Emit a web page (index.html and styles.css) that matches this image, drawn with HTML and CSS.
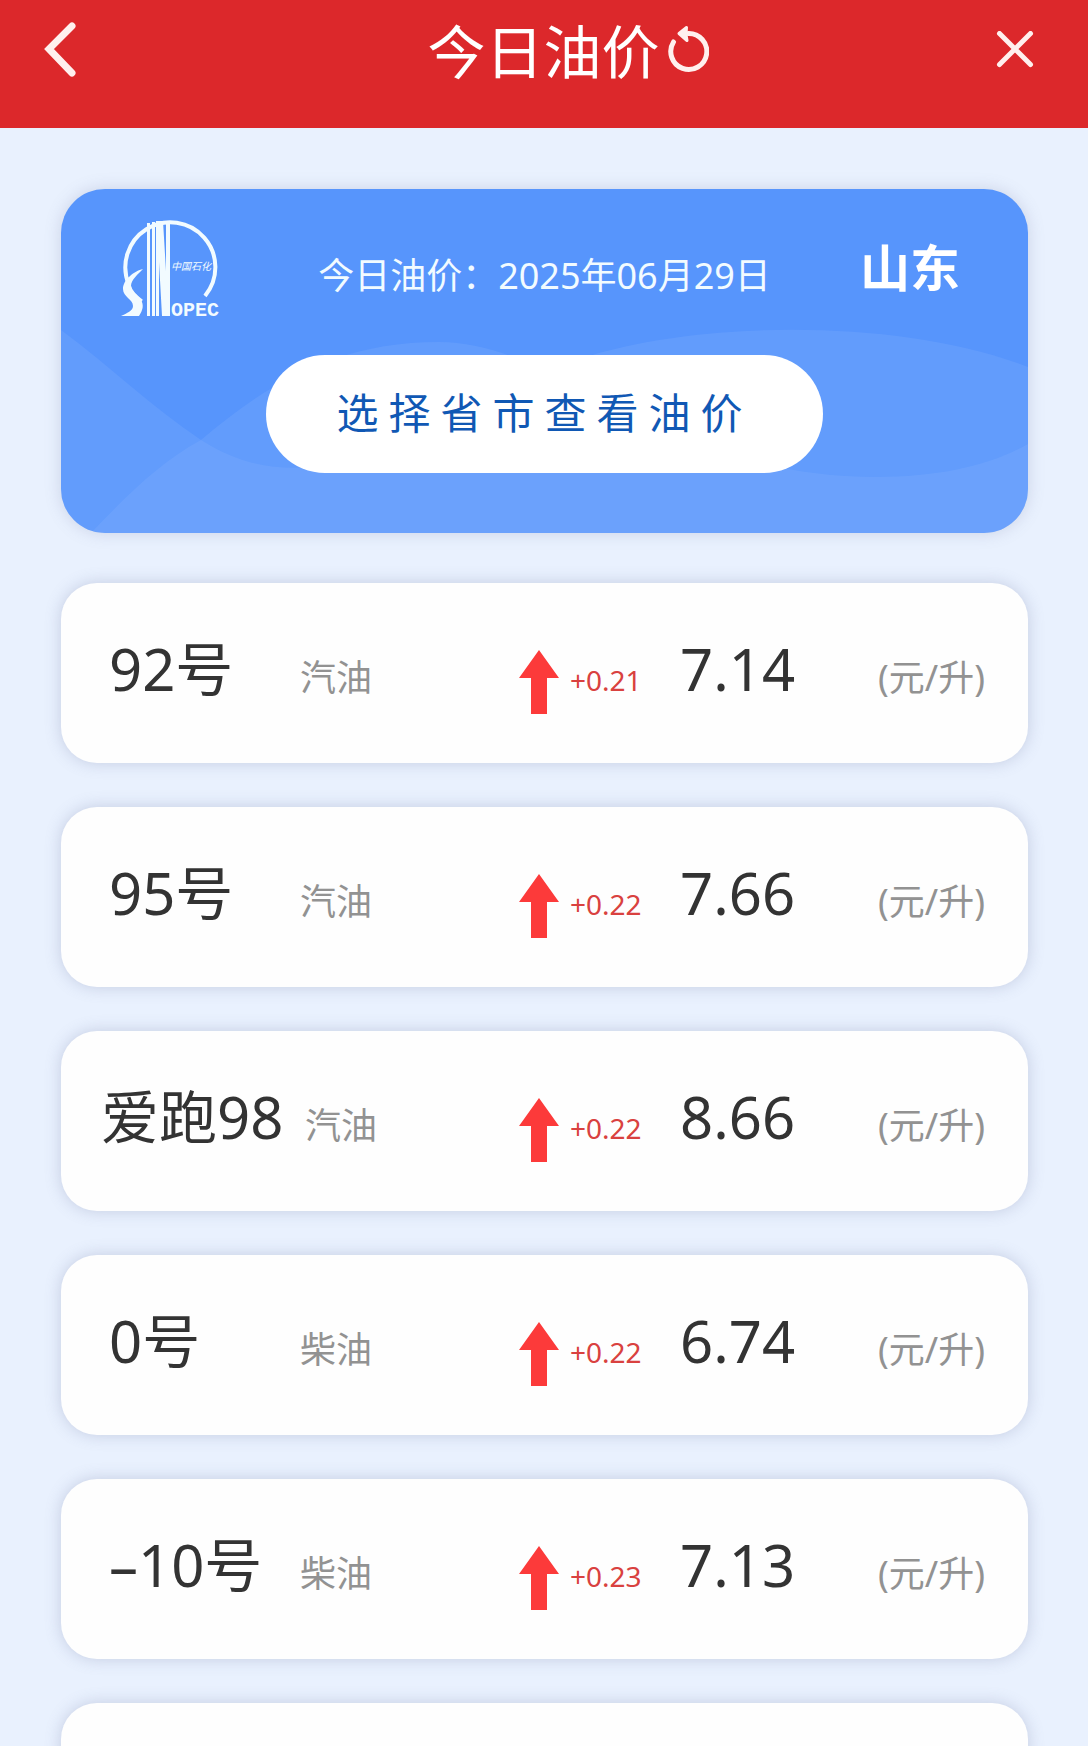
FILE: index.html
```html
<!DOCTYPE html>
<html lang="zh-CN">
<head>
<meta charset="utf-8">
<meta name="viewport" content="width=device-width, initial-scale=1">
<title>今日油价</title>
<link rel="stylesheet" href="styles.css">
</head>
<body>
<header class="topbar">
  <div class="topbar-start">
    <button class="icon-button" type="button" aria-label="返回">
      <svg width="34" height="56" viewBox="0 0 34 56" fill="none" stroke="currentColor" stroke-width="7" stroke-linecap="round" stroke-linejoin="miter"><path d="M29 4 6 27l23 24"/></svg>
    </button>
  </div>
  <h1 class="topbar-title">今日油价</h1>
  <div class="topbar-end">
    <button class="icon-button" type="button" aria-label="刷新">
      <svg width="42" height="50" viewBox="0 0 42 50" fill="none" stroke="currentColor" stroke-width="5" stroke-linecap="round"><path d="M6.500 17A18 18 0 1 0 21 8.500"/><path fill="currentColor" stroke-width="3" stroke-linejoin="round" d="M19.500 2.500 12 8.500l8 7-1-6z"/></svg>
    </button>
    <button class="icon-button" type="button" aria-label="关闭">
      <svg width="38" height="38" viewBox="0 0 38 38" fill="none" stroke="currentColor" stroke-width="5" stroke-linecap="round"><path d="m3.500 2.500 31 31m0-31-31 31"/></svg>
    </button>
  </div>
</header>

<main class="content">
  <section class="hero">
    <svg class="hero-waves" viewBox="0 0 967 344" preserveAspectRatio="none" aria-hidden="true">
      <path d="M0 141C50 178 92 219 140 251C178 275 212 281 250 278C350 266 430 196 538 164C660 130 850 132 967 178V344H0Z"/>
      <path d="M30 344C70 302 100 273 140 251C200 200 270 153 378 153C500 153 600 288 815 288C880 288 930 276 967 255V344Z"/>
    </svg>
    <div class="hero-info">
      <svg class="logo" width="98" height="108" viewBox="0 0 98 108" role="img" aria-label="SINOPEC 中国石化">
        <path d="M8 68A45 45 0 1 1 84 79" fill="none" stroke="currentColor" stroke-width="4"/>
        <path d="M26 6h3v93h-3zM31 5h3v94h-3zM35 4h7l3 50V4h4v95h-8l-3-54v54h-3z" fill="currentColor"/>
        <path d="M22 52C13 54 2 63 2 72c0 8 10 10 10 17 0 5-6 7-12 10h18c4-6 5-11 2-16-3-6-10-8-10-14 0-6 7-12 12-17z" fill="currentColor"/>
        <path d="M8 68c2 7 7 12 13 16" fill="none" stroke="currentColor" stroke-width="3"/>
        <text class="logo-script" x="50" y="53">中国石化</text>
        <text class="logo-name" x="50" y="99">OPEC</text>
      </svg>
      <p class="hero-date">今日油价：2025年06月29日</p>
      <strong class="hero-region">山东</strong>
    </div>
    <button class="region-button" type="button">选择省市查看油价</button>
  </section>

  <ul class="prices">
    <li class="price-row">
      <span class="grade">92号</span><span class="kind">汽油</span>
      <svg class="arrow" width="42" height="66" viewBox="0 0 42 66" aria-hidden="true"><path d="M21 1 41 29H29V65H13V29H1Z"/></svg>
      <span class="change">+0.21</span><span class="price">7.14</span><span class="unit">(元/升)</span>
    </li>
    <li class="price-row">
      <span class="grade">95号</span><span class="kind">汽油</span>
      <svg class="arrow" width="42" height="66" viewBox="0 0 42 66" aria-hidden="true"><path d="M21 1 41 29H29V65H13V29H1Z"/></svg>
      <span class="change">+0.22</span><span class="price">7.66</span><span class="unit">(元/升)</span>
    </li>
    <li class="price-row price-row-long">
      <span class="grade">爱跑98</span><span class="kind">汽油</span>
      <svg class="arrow" width="42" height="66" viewBox="0 0 42 66" aria-hidden="true"><path d="M21 1 41 29H29V65H13V29H1Z"/></svg>
      <span class="change">+0.22</span><span class="price">8.66</span><span class="unit">(元/升)</span>
    </li>
    <li class="price-row">
      <span class="grade">0号</span><span class="kind">柴油</span>
      <svg class="arrow" width="42" height="66" viewBox="0 0 42 66" aria-hidden="true"><path d="M21 1 41 29H29V65H13V29H1Z"/></svg>
      <span class="change">+0.22</span><span class="price">6.74</span><span class="unit">(元/升)</span>
    </li>
    <li class="price-row">
      <span class="grade">–10号</span><span class="kind">柴油</span>
      <svg class="arrow" width="42" height="66" viewBox="0 0 42 66" aria-hidden="true"><path d="M21 1 41 29H29V65H13V29H1Z"/></svg>
      <span class="change">+0.23</span><span class="price">7.13</span><span class="unit">(元/升)</span>
    </li>
    <li class="price-row"></li>
  </ul>
</main>
</body>
</html>
```
FILE: styles.css
```css
* {
  box-sizing: border-box;
}

html {
  height: 100%;
  overflow: hidden;
}

body {
  height: 100%;
  margin: 0;
  overflow: hidden auto;
  scrollbar-width: none;
  background: #e9f1fe;
  color: #333;
  font-family: "Noto Sans", "Noto Sans CJK SC", sans-serif;
}

button {
  border: 0;
  padding: 0;
  font-family: inherit;
  cursor: pointer;
}

.topbar {
  display: grid;
  grid-template-columns: 1fr auto 1fr;
  align-items: center;
  height: 128px;
  padding: 0 54px 28px 43px;
  background: #dc282b;
  color: #fff0ee;
}

.topbar-start,
.topbar-end {
  display: flex;
  align-items: center;
}

.topbar-end {
  justify-content: space-between;
  padding-left: 7px;
}

.topbar-title {
  margin: 0;
  padding: 4px 0 0 10px;
  color: #fff;
  font-size: 58px;
  font-weight: 400;
  line-height: 80px;
}

.icon-button {
  display: flex;
  background: none;
  color: inherit;
}

.content {
  padding: 61px 60px 44px 61px;
}

.hero {
  position: relative;
  display: flex;
  flex-direction: column;
  align-items: center;
  overflow: hidden;
  min-height: 344px;
  padding: 28px 60px 60px;
  border-radius: 44px;
  background: #5795fc;
  box-shadow: 0 0 16px rgba(110, 120, 160, 0.25);
  color: #fff;
}

.hero-waves {
  position: absolute;
  inset: 0;
  width: 100%;
  height: 100%;
  fill: rgba(150, 190, 255, 0.18);
}

.hero-info {
  position: relative;
  display: grid;
  grid-template-columns: 1fr auto 1fr;
  align-items: start;
  width: 100%;
  margin-bottom: 30px;
}

.logo {
  overflow: visible;
  color: #f2fbff;
  fill: currentColor;
}

.logo-script {
  font-family: "Noto Sans CJK SC", sans-serif;
  font-size: 10px;
  font-style: italic;
}

.logo-name {
  font-family: "Liberation Mono", monospace;
  font-size: 20px;
  font-weight: 700;
}

.hero-date {
  margin: 0;
  padding-top: 35px;
  color: #f2fbff;
  font-size: 36px;
  line-height: 48px;
}

.hero-region {
  justify-self: end;
  padding-right: 8px;
  font-size: 50px;
  font-weight: 700;
  line-height: 102px;
}

.region-button {
  position: relative;
  min-height: 118px;
  padding: 0 70px 8px;
  border-radius: 60px;
  background: #fff;
  color: #1058b4;
  font-size: 42px;
  letter-spacing: 10px;
}

.prices {
  display: grid;
  gap: 44px;
  margin: 50px 0 0;
  padding: 0;
  list-style: none;
}

.price-row {
  display: grid;
  grid-template-columns: 191px 1fr 52px 110px 198px 109px;
  grid-template-rows: 84px;
  align-items: baseline;
  min-height: 180px;
  padding: 48px 41px 48px 48px;
  border-radius: 36px;
  background: #fefefe;
  box-shadow: 0 0 16px rgba(110, 120, 160, 0.3);
  line-height: 76px;
  white-space: nowrap;
}

.price-row-long {
  grid-template-columns: 204px 1fr 52px 110px 198px 109px;
  padding-left: 40px;
}

.grade,
.price {
  font-size: 58px;
}

.kind,
.unit {
  color: #929292;
  font-size: 36px;
}

.arrow {
  align-self: end;
  fill: #fc3a3a;
}

.change {
  color: #d9413f;
  font-size: 28px;
}
```
